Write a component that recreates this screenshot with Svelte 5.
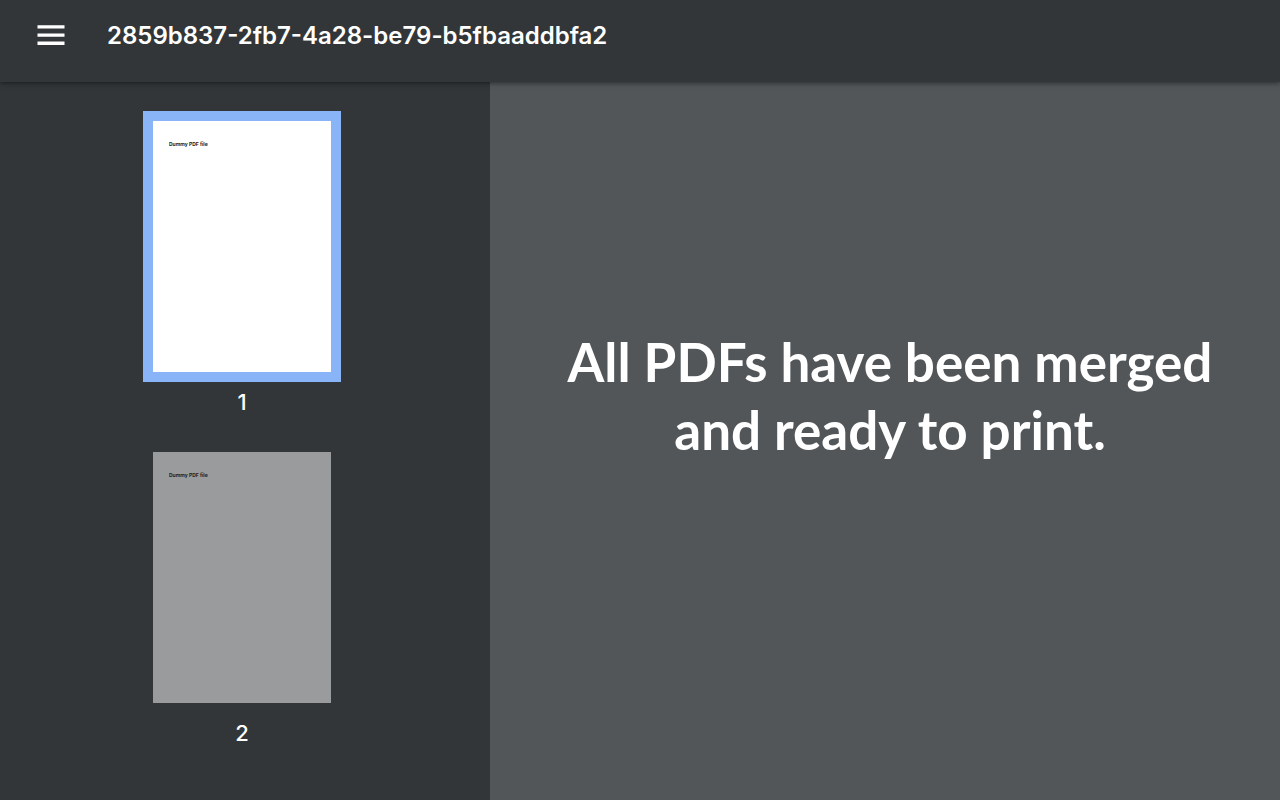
<script>
  let title = "2859b837-2fb7-4a28-be79-b5fbaaddbfa2";
  let pages = [
    { number: 1, text: "Dummy PDF file" },
    { number: 2, text: "Dummy PDF file" },
  ];

  let selected = $state(1);
  let sidebarOpen = $state(true);
</script>

<div class="viewer">
  <header class="toolbar">
    <button
      class="menu-button"
      aria-label="Toggle sidebar"
      aria-expanded={sidebarOpen}
      onclick={() => (sidebarOpen = !sidebarOpen)}
    >
      <svg width="28" height="22" viewBox="0 0 28 22" aria-hidden="true">
        <path d="M.5.2h27v3.3H.5zM.5 8.4h27v3.3H.5zM.5 16.6h27v3.3H.5z" fill="#fff" />
      </svg>
    </button>
    <h1>{title}</h1>
  </header>

  <div class="content">
    {#if sidebarOpen}
      <nav class="sidebar" aria-label="Pages">
        {#each pages as page (page.number)}
          <button
            class="thumbnail"
            class:selected={selected === page.number}
            aria-current={selected === page.number ? "page" : undefined}
            onclick={() => (selected = page.number)}
          >
            <span class="sheet">{page.text}</span>
            <span class="page-number">{page.number}</span>
          </button>
        {/each}
      </nav>
    {/if}

    <main>
      <p>All PDFs have been merged <br />and ready to print.</p>
    </main>
  </div>
</div>

<style>
  :global(body) {
    background: #525659;
  }

  .viewer {
    min-height: 100vh;
    display: flex;
    flex-direction: column;
    color: #fff;
    font-family: Inter, "Liberation Sans", sans-serif;
  }

  .toolbar {
    position: relative;
    z-index: 1;
    display: flex;
    align-items: center;
    gap: 42px;
    padding: 12px 37px 22px;
    background: #323639;
    box-shadow: 0 1px 5px rgba(0, 0, 0, 0.5);
  }

  .toolbar h1 {
    margin: 0;
    font-size: 24px;
    line-height: 48px;
    font-weight: 600;
  }

  .menu-button {
    display: flex;
    padding: 0;
    border: 0;
    background: none;
    cursor: pointer;
  }

  .content {
    flex: 1;
    display: flex;
  }

  .sidebar {
    width: 490px;
    box-sizing: border-box;
    flex-shrink: 0;
    display: flex;
    flex-direction: column;
    align-items: center;
    gap: 20px;
    padding: 29px 6px 29px 0;
    background: #323639;
  }

  .thumbnail {
    display: flex;
    flex-direction: column;
    align-items: center;
    padding: 0;
    border: 0;
    background: none;
    color: #fff;
    font-family: inherit;
    cursor: pointer;
  }

  .sheet {
    width: 178px;
    height: 251px;
    box-sizing: border-box;
    margin: 10px;
    padding: 20px 16px;
    background: #9a9b9c;
    color: #202124;
    font-size: 5px;
    line-height: 6px;
    font-weight: 700;
    text-align: left;
  }

  .selected .sheet {
    background: #fff;
    box-shadow: 0 0 0 10px #8ab4f8;
  }

  .page-number {
    font-size: 22px;
    line-height: 40px;
    font-weight: 500;
  }

  main {
    flex: 1;
    display: flex;
    align-items: center;
    justify-content: center;
    padding: 0 0 90px 10px;
  }

  main p {
    margin: 0;
    font-family: Lato, "Liberation Sans", sans-serif;
    font-size: 53px;
    line-height: 68px;
    font-weight: 700;
    text-align: center;
  }
</style>
